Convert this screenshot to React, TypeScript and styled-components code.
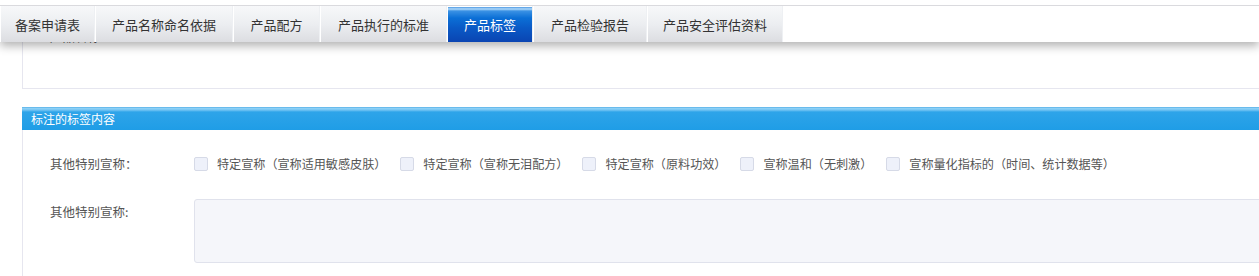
import React from 'react'
import styled, { createGlobalStyle } from 'styled-components'

const GlobalStyle = createGlobalStyle`
  html, body {
    margin: 0;
    padding: 0;
    background: #fff;
    overflow: hidden;
  }
  body {
    font-family: "Noto Sans CJK SC", "Noto Sans", sans-serif;
    color: #555;
  }
`

const TABS = [
  { label: '备案申请表', w: 95 },
  { label: '产品名称命名依据', w: 138 },
  { label: '产品配方', w: 87 },
  { label: '产品执行的标准', w: 127 },
  { label: '产品标签', w: 86, active: true },
  { label: '产品检验报告', w: 114 },
  { label: '产品安全评估资料', w: 136 },
]

const CLAIMS = [
  '特定宣称（宣称适用敏感皮肤）',
  '特定宣称（宣称无泪配方）',
  '特定宣称（原料功效）',
  '宣称温和（无刺激）',
  '宣称量化指标的（时间、统计数据等）',
]

const App = () => {
  return (
    <>
      <GlobalStyle />
      <TabBar>
        <TabRow>
          {TABS.map((t) => (
            <Tab key={t.label} $w={t.w} $active={!!t.active}>
              {t.label}
            </Tab>
          ))}
        </TabRow>
      </TabBar>

      <Page>
        <Panel>
          <PanelBody $top={27}>
            <Label>产品名称：</Label>
          </PanelBody>
        </Panel>

        <Section>
          <SectionHeader>标注的标签内容</SectionHeader>
          <SectionBody>
            <FormRow>
              <Label>其他特别宣称：</Label>
              <Options>
                {CLAIMS.map((c) => (
                  <Option key={c}>
                    <Check />
                    <span>{c}</span>
                  </Option>
                ))}
              </Options>
            </FormRow>
            <FormRow $top>
              <Label $pad>其他特别宣称:</Label>
              <TextArea />
            </FormRow>
          </SectionBody>
        </Section>
      </Page>
    </>
  )
}

const TabBar = styled.div`
  position: fixed;
  top: 0;
  left: 0;
  right: 0;
  z-index: 10;
  padding-top: 5px;
  background: #fff;
  box-shadow: 0 4px 9px rgba(0, 0, 0, 0.3);
`

const TabRow = styled.div`
  display: flex;
  height: 36px;
  border-top: 1px solid #dadade;
  background: #fff;
`

const Tab = styled.div<{ $w: number; $active: boolean }>`
  box-sizing: border-box;
  width: ${({ $w }) => $w}px;
  display: flex;
  align-items: center;
  justify-content: center;
  font-size: 13px;
  color: ${({ $active }) => ($active ? '#fff' : '#333')};
  border-right: 1px solid #eef0f3;
  border-left: 1px solid #fff;
  background: ${({ $active }) =>
    $active
      ? 'linear-gradient(to bottom, #fff 0, #fff 1px, #4b97e2 1px, #b2dafa 3px, #3a91e4 5px, #0b6fd6 12px, #0a5ac6 60%, #0a44b2 100%)'
      : 'linear-gradient(to bottom, #f7f8fa 0, #eceef1 50%, #dcdde1 100%)'};
`

const Page = styled.div`
  width: 1320px;
`

const Panel = styled.div`
  margin-left: 22px;
  height: 89px;
  box-sizing: border-box;
  border-left: 1px solid #e6e6ef;
  border-bottom: 1px solid #e6e6ef;
`

const PanelBody = styled.div<{ $top: number }>`
  padding: ${({ $top }) => $top}px 0 0 27px;
`

const Section = styled.div`
  margin: 18px 0 0 22px;
`

const SectionHeader = styled.div`
  height: 23px;
  line-height: 23px;
  padding-left: 9px;
  font-size: 12px;
  color: #fff;
  background: linear-gradient(
    to bottom,
    #3fa2e2 0,
    #93d4f7 1px,
    #74c4f3 3px,
    #2ea4e9 5px,
    #1f9de6 100%
  );
`

const SectionBody = styled.div`
  box-sizing: border-box;
  height: 146px;
  border-left: 1px solid #e6e6ef;
  padding: 24px 0 0 27px;
`

const FormRow = styled.div<{ $top?: boolean }>`
  display: flex;
  align-items: ${({ $top }) => ($top ? 'flex-start' : 'center')};
  margin-top: ${({ $top }) => ($top ? '25px' : '0')};
`

const Label = styled.div<{ $pad?: boolean }>`
  width: 144px;
  flex: none;
  font-size: 12.5px;
  color: #555;
  line-height: 20px;
  padding-top: ${({ $pad }) => ($pad ? '3px' : '0')};
`

const Options = styled.div`
  display: flex;
  align-items: center;
  gap: 14px;
`

const Option = styled.label`
  display: flex;
  align-items: center;
  gap: 9px;
  font-size: 12.1px;
  color: #555;
  line-height: 20px;
  white-space: nowrap;
`

const Check = styled.span`
  display: inline-block;
  width: 12px;
  height: 12px;
  border: 1px solid #d6dae7;
  border-radius: 2px;
  background: #eef1fa;
`

const TextArea = styled.div`
  flex: 1;
  height: 62px;
  border: 1px solid #e0e2ec;
  border-radius: 3px;
  background: #f5f6fa;
`

export default App
